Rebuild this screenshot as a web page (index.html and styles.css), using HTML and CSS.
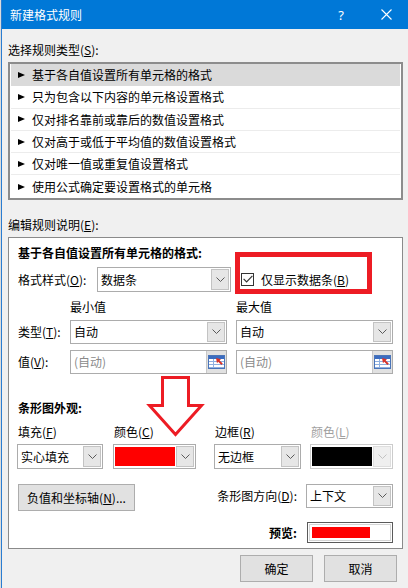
FILE: index.html
```html
<!DOCTYPE html>
<html lang="zh-CN">
<head>
<meta charset="utf-8">
<title>新建格式规则</title>
<link rel="stylesheet" href="styles.css">
</head>
<body>
<div class="dialog">
  <div class="titlebar">
    <span class="title">新建格式规则</span>
    <span class="help">?</span>
    <span class="close"><svg width="11" height="11" viewBox="0 0 11 11"><path d="M0.5 0.5 L10.5 10.5 M10.5 0.5 L0.5 10.5" stroke="#fff" stroke-width="1.1" fill="none"/></svg></span>
  </div>
  <div class="content">
    <div class="lbl">选择规则类型(<u>S</u>):</div>
    <ul class="rulelist">
      <li class="sel"><span class="tri"></span>基于各自值设置所有单元格的格式</li>
      <li><span class="tri"></span>只为包含以下内容的单元格设置格式</li>
      <li><span class="tri"></span>仅对排名靠前或靠后的数值设置格式</li>
      <li><span class="tri"></span>仅对高于或低于平均值的数值设置格式</li>
      <li><span class="tri"></span>仅对唯一值或重复值设置格式</li>
      <li class="last"><span class="tri"></span>使用公式确定要设置格式的单元格</li>
    </ul>
    <div class="lbl sec2">编辑规则说明(<u>E</u>):</div>
    <div class="group">
      <div class="heading">基于各自值设置所有单元格的格式:</div>
      <div class="style-row">
        <span class="style-label">格式样式(<u>O</u>):</span>
        <div class="combo w134"><span class="val">数据条</span><span class="dd"><svg class="chev" width="9" height="5" viewBox="0 0 9 5"><polyline points="0.5,0.5 4.5,4.5 8.5,0.5" fill="none" stroke="#5a5a5a" stroke-width="1"/></svg></span></div>
        <span class="chk"><svg width="10" height="8" viewBox="0 0 10 8"><polyline points="0.6,3.8 3.6,6.8 9.4,0.8" fill="none" stroke="#333" stroke-width="1.2"/></svg></span>
        <span class="chk-label">仅显示数据条(<u>B</u>)</span>
      </div>
      <div class="minmax">
        <span class="mm1">最小值</span>
        <span>最大值</span>
      </div>
      <div class="pair-row">
        <span class="pair-label">类型(<u>T</u>):</span>
        <div class="combo w157"><span class="val">自动</span><span class="dd"><svg class="chev" width="9" height="5" viewBox="0 0 9 5"><polyline points="0.5,0.5 4.5,4.5 8.5,0.5" fill="none" stroke="#5a5a5a" stroke-width="1"/></svg></span></div>
        <div class="combo w157 second"><span class="val">自动</span><span class="dd"><svg class="chev" width="9" height="5" viewBox="0 0 9 5"><polyline points="0.5,0.5 4.5,4.5 8.5,0.5" fill="none" stroke="#5a5a5a" stroke-width="1"/></svg></span></div>
      </div>
      <div class="pair-row value-row">
        <span class="pair-label">值(<u>V</u>):</span>
        <div class="input w157"><span class="val muted">(自动)</span><span class="refbtn"><svg width="17" height="14" viewBox="0 0 17 14"><rect x="0.5" y="0.5" width="16" height="13" fill="#fff" stroke="#4a74b8"/><rect x="1" y="1" width="15" height="3" fill="#3b6cc0"/><path d="M1 6.5 H16 M1 9.5 H16 M1 12.5 H16 M5.5 4 V13" stroke="#8fb0e0" stroke-width="1"/><polygon points="8,3 13,4.2 11.6,5.4 14.8,8.6 13.4,10 10.2,6.8 9,8.2" fill="#d8332a"/></svg></span></div>
        <div class="input w157 second"><span class="val muted">(自动)</span><span class="refbtn"><svg width="17" height="14" viewBox="0 0 17 14"><rect x="0.5" y="0.5" width="16" height="13" fill="#fff" stroke="#4a74b8"/><rect x="1" y="1" width="15" height="3" fill="#3b6cc0"/><path d="M1 6.5 H16 M1 9.5 H16 M1 12.5 H16 M5.5 4 V13" stroke="#8fb0e0" stroke-width="1"/><polygon points="8,3 13,4.2 11.6,5.4 14.8,8.6 13.4,10 10.2,6.8 9,8.2" fill="#d8332a"/></svg></span></div>
      </div>
      <div class="heading appear-heading">条形图外观:</div>
      <div class="appear-row">
        <div class="col c1">
          <span class="col-label">填充(<u>F</u>)</span>
          <div class="combo"><span class="val">实心填充</span><span class="dd"><svg class="chev" width="9" height="5" viewBox="0 0 9 5"><polyline points="0.5,0.5 4.5,4.5 8.5,0.5" fill="none" stroke="#5a5a5a" stroke-width="1"/></svg></span></div>
        </div>
        <div class="col c2">
          <span class="col-label">颜色(<u>C</u>)</span>
          <div class="combo color"><span class="swatch red"></span><span class="dd"><svg class="chev" width="9" height="5" viewBox="0 0 9 5"><polyline points="0.5,0.5 4.5,4.5 8.5,0.5" fill="none" stroke="#5a5a5a" stroke-width="1"/></svg></span></div>
        </div>
        <div class="col c3">
          <span class="col-label">边框(<u>R</u>)</span>
          <div class="combo"><span class="val">无边框</span><span class="dd"><svg class="chev" width="9" height="5" viewBox="0 0 9 5"><polyline points="0.5,0.5 4.5,4.5 8.5,0.5" fill="none" stroke="#5a5a5a" stroke-width="1"/></svg></span></div>
        </div>
        <div class="col c4">
          <span class="col-label disabled">颜色(<u>L</u>)</span>
          <div class="combo color off"><span class="swatch black"></span><span class="dd"><svg class="chev" width="9" height="5" viewBox="0 0 9 5"><polyline points="0.5,0.5 4.5,4.5 8.5,0.5" fill="none" stroke="#c2c2c2" stroke-width="1"/></svg></span></div>
        </div>
      </div>
      <div class="bottom-row">
        <button class="btn axis">负值和坐标轴(<u>N</u>)...</button>
        <span class="dir-label">条形图方向(<u>D</u>):</span>
        <div class="combo w87 dir"><span class="val">上下文</span><span class="dd"><svg class="chev" width="9" height="5" viewBox="0 0 9 5"><polyline points="0.5,0.5 4.5,4.5 8.5,0.5" fill="none" stroke="#5a5a5a" stroke-width="1"/></svg></span></div>
      </div>
      <div class="preview-row">
        <span class="pv-label">预览:</span>
        <div class="preview"><div class="pv-inner"><div class="pv-bar"></div></div></div>
      </div>
      <div class="redbox"></div>
      <svg class="arrow" width="60" height="66" viewBox="0 0 60 66"><polygon points="16.5,3.5 42.5,3.5 42.5,31.5 55.5,31.5 29.5,60.5 3.5,31.5 16.5,31.5" fill="none" stroke="#ed1c24" stroke-width="3"/></svg>
    </div>
    <div class="footer">
      <button class="btn ok">确定</button>
      <button class="btn cancel">取消</button>
    </div>
  </div>
</div>
</body>
</html>
```

FILE: styles.css
```css
* { box-sizing: border-box; }
html, body { margin: 0; padding: 0; }
body {
  width: 408px;
  height: 588px;
  overflow: hidden;
  background: #dcdcdc;
  font-family: "Noto Sans CJK SC", "Noto Sans", sans-serif;
  font-size: 12px;
  color: #000;
}
u { text-decoration: underline; text-underline-offset: 1px; }

.dialog {
  margin-left: 1px;
  height: 588px;
  border-left: 1px solid #2a7dd1;
  background: #f0f0f0;
}

.titlebar {
  height: 29px;
  background: #0078d7;
  color: #fff;
  display: flex;
  align-items: center;
}
.title { flex: 1; padding-left: 8px; line-height: 16px; }
.help {
  width: 46px;
  text-align: center;
  font-family: "Noto Sans", "DejaVu Sans", sans-serif;
  font-size: 13px;
  line-height: 16px;
}
.close { width: 44px; display: flex; justify-content: center; align-items: center; }
.close svg { display: block; }

.content { padding: 13px 5px 0 6px; }
.lbl { line-height: 16px; }
.sec2 { margin-top: 17px; }

.rulelist {
  list-style: none;
  margin: 4px 0 0;
  padding: 0 1px;
  border: 2px solid #8c8c8c;
  background: #fff;
}
.rulelist li {
  height: 22.3px;
  display: flex;
  align-items: center;
  padding-left: 7px;
  border-bottom: 1px solid #ececec;
}
.rulelist li.last { border-bottom: none; }
.rulelist li.sel { background: #dadada; border-bottom-color: #dadada; }
.tri {
  width: 0;
  height: 0;
  border-left: 7px solid #000;
  border-top: 3.5px solid transparent;
  border-bottom: 3.5px solid transparent;
  margin-right: 7px;
}

.group {
  position: relative;
  margin-top: 4px;
  border: 1px solid #8a8a8a;
  background: #fff;
  padding: 7px 9px 5px 9px;
}
.heading { font-weight: bold; line-height: 16px; }
.appear-heading { margin-top: 26px; }

.combo, .input {
  display: flex;
  border: 1px solid #acacac;
  background: #fff;
  padding: 1px;
}
.combo .val, .input .val {
  flex: 1;
  display: flex;
  align-items: center;
  padding-left: 2px;
  white-space: nowrap;
  overflow: hidden;
}
.dd {
  width: 18px;
  background: #e6e6e6;
  border: 1px solid #c3c3c3;
  display: flex;
  align-items: center;
  justify-content: center;
}
.chev { display: block; }
.muted { color: #8a8a8a; }
.refbtn {
  width: 20px;
  margin: -1px -1px -1px 0;
  background: #e1e1e1;
  border-left: 1px solid #c8c8c8;
  display: flex;
  align-items: center;
  justify-content: center;
}
.refbtn svg { display: block; }

.w134 { width: 134px; }
.w157 { width: 157px; }
.w87 { width: 87px; }

.style-row { display: flex; align-items: center; height: 25px; margin-top: 6px; }
.style-row .combo { height: 25px; }
.style-label { width: 79px; }
.chk {
  margin-left: 10px;
  width: 13px;
  height: 13px;
  border: 1px solid #333;
  background: #fff;
  display: flex;
  align-items: center;
  justify-content: center;
}
.chk svg { display: block; }
.chk-label { margin-left: 7px; }

.minmax { display: flex; margin-top: 7px; padding-left: 52px; line-height: 16px; }
.mm1 { width: 166px; }

.pair-row { display: flex; align-items: center; height: 24px; margin-top: 5px; }
.pair-row .combo, .pair-row .input { height: 24px; }
.value-row { margin-top: 6px; }
.pair-label { width: 52px; }
.second { margin-left: 9px; }

.appear-row { display: flex; margin-top: 8px; margin-left: -1px; }
.col { display: flex; flex-direction: column; }
.col-label { line-height: 16px; padding-left: 1px; margin-bottom: 4px; }
.col .combo { height: 25px; }
.c1 { width: 86px; }
.c2 { width: 83px; margin-left: 10px; }
.c3 { width: 87px; margin-left: 18px; }
.c4 { width: 83px; margin-left: 9px; }
.disabled { color: #a0a0a0; }
.swatch { flex: 1; margin: 1px 1px 1px 0; }
.swatch.red { background: #ff0000; }
.swatch.black { background: #000; }
.combo.off { border-color: #cccccc; }
.combo.off .dd { background: #efefef; border-color: #dedede; }

.bottom-row { display: flex; align-items: flex-start; margin-top: 15px; }
.btn {
  font-family: inherit;
  font-size: 12px;
  color: #000;
  background: #e1e1e1;
  border: 1px solid #adadad;
  padding: 0;
  height: 27px;
}
.axis { width: 117px; }
.dir-label { margin-left: auto; margin-right: 9px; line-height: 24px; }
.dir { height: 24px; }

.preview-row { display: flex; justify-content: flex-end; align-items: center; margin-top: 11px; height: 21px; }
.pv-label { font-weight: bold; margin-right: 10px; }
.preview { width: 86px; height: 21px; border: 1px solid #5a5a5a; padding: 1px; background: #fff; }
.pv-inner { height: 100%; border: 1px solid #d4d4d4; padding: 2px; }
.pv-bar { width: 58px; height: 100%; background: #ff0000; }

.redbox {
  position: absolute;
  left: 226px;
  top: 14px;
  width: 137px;
  height: 42px;
  border: 5px solid #ed1c24;
}
.arrow { position: absolute; left: 137px; top: 136px; display: block; }

.footer { display: flex; justify-content: flex-end; gap: 11px; margin-top: 6px; padding-right: 6px; }
.ok, .cancel { width: 73px; }
```
